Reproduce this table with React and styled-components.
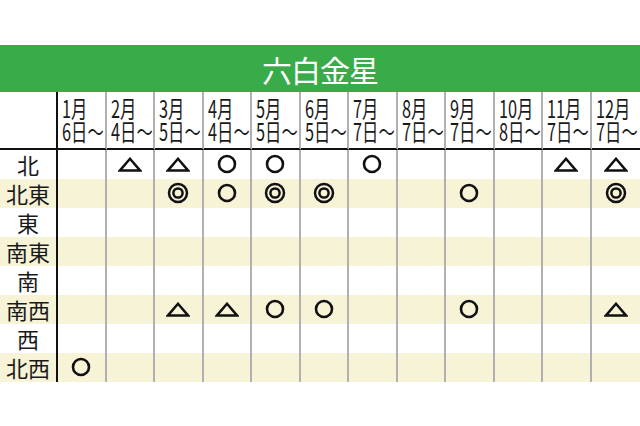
import React from "react";
import styled, { createGlobalStyle } from "styled-components";

const GlobalStyle = createGlobalStyle`
  html, body { margin: 0; padding: 0; background: #ffffff; }
  body { font-family: "Noto Sans CJK JP", "Noto Sans", sans-serif; color: #111; }
`;

const Page = styled.div`
  width: 640px;
  padding-top: 45px;
`;

const TitleBar = styled.div`
  height: 47px;
  background: #3aab49;
  color: #ffffff;
  display: flex;
  align-items: center;
  justify-content: center;
  font-size: 30px;
  font-weight: 400;
  letter-spacing: -1px;
`;

const Grid = styled.div`
  display: grid;
  grid-template-columns: 58px repeat(12, minmax(0, 1fr));
`;

const Corner = styled.div`
  height: 57.5px;
  box-sizing: border-box;
  border-right: 2px solid #111;
  border-bottom: 2px solid #111;
`;

const HeadCell = styled.div`
  height: 57.5px;
  min-width: 0;
  box-sizing: border-box;
  border-bottom: 2px solid #111;
  border-right: ${(p) => (p.$last ? "none" : "2px solid #b0b0b0")};
  padding: 4px 0 0 4px;
`;

const HeadText = styled.div`
  font-size: 24px;
  line-height: 23px;
  white-space: pre;
  transform: scaleX(0.68);
  transform-origin: left center;
  color: #1a1a1a;
`;

const Label = styled.div`
  height: 29px;
  line-height: 29px;
  box-sizing: border-box;
  text-align: center;
  font-size: 22px;
  color: #1a1a1a;
  background: ${(p) => (p.$alt ? "#f6f3d7" : "#ffffff")};
  border-right: 2px solid #111;
`;

const Cell = styled.div`
  height: 29px;
  min-width: 0;
  box-sizing: border-box;
  display: flex;
  align-items: center;
  justify-content: center;
  background: ${(p) => (p.$alt ? "#f6f3d7" : "#ffffff")};
  border-right: ${(p) => (p.$last ? "none" : "2px solid #b0b0b0")};
`;

const Tri = () => (
  <svg width="24" height="15" viewBox="0 0 24 15">
    <polygon points="12,1.8 22,13.4 2,13.4" fill="none" stroke="#111" strokeWidth="2.5" strokeLinejoin="miter" />
  </svg>
);

const Circ = () => (
  <svg width="20" height="20" viewBox="0 0 20 20">
    <circle cx="10" cy="10" r="8" fill="none" stroke="#111" strokeWidth="2.6" />
  </svg>
);

const Dbl = () => (
  <svg width="22" height="22" viewBox="0 0 22 22">
    <circle cx="11" cy="11" r="9" fill="none" stroke="#111" strokeWidth="2.5" />
    <circle cx="11" cy="11" r="4.6" fill="none" stroke="#111" strokeWidth="2.5" />
  </svg>
);

const months = [
  ["1月", "6日～"],
  ["2月", "4日～"],
  ["3月", "5日～"],
  ["4月", "4日～"],
  ["5月", "5日～"],
  ["6月", "5日～"],
  ["7月", "7日～"],
  ["8月", "7日～"],
  ["9月", "7日～"],
  ["10月", "8日～"],
  ["11月", "7日～"],
  ["12月", "7日～"],
];

const rows = [
  ["北", ["", "t", "t", "o", "o", "", "o", "", "", "", "t", "t"]],
  ["北東", ["", "", "d", "o", "d", "d", "", "", "o", "", "", "d"]],
  ["東", ["", "", "", "", "", "", "", "", "", "", "", ""]],
  ["南東", ["", "", "", "", "", "", "", "", "", "", "", ""]],
  ["南", ["", "", "", "", "", "", "", "", "", "", "", ""]],
  ["南西", ["", "", "t", "t", "o", "o", "", "", "o", "", "", "t"]],
  ["西", ["", "", "", "", "", "", "", "", "", "", "", ""]],
  ["北西", ["o", "", "", "", "", "", "", "", "", "", "", ""]],
];

const Mark = ({ k }) => {
  if (k === "t") return <Tri />;
  if (k === "o") return <Circ />;
  if (k === "d") return <Dbl />;
  return null;
};

export default function App() {
  return (
    <>
      <GlobalStyle />
      <Page>
        <TitleBar>六白金星</TitleBar>
        <Grid>
          <Corner />
          {months.map(([m, d], i) => (
            <HeadCell key={m} $last={i === 11}>
              <HeadText>{`${m}\n${d}`}</HeadText>
            </HeadCell>
          ))}
          {rows.map(([name, marks], r) => (
            <React.Fragment key={name}>
              <Label $alt={r % 2 === 1}>{name}</Label>
              {marks.map((k, i) => (
                <Cell key={i} $alt={r % 2 === 1} $last={i === 11}>
                  <Mark k={k} />
                </Cell>
              ))}
            </React.Fragment>
          ))}
        </Grid>
      </Page>
    </>
  );
}
